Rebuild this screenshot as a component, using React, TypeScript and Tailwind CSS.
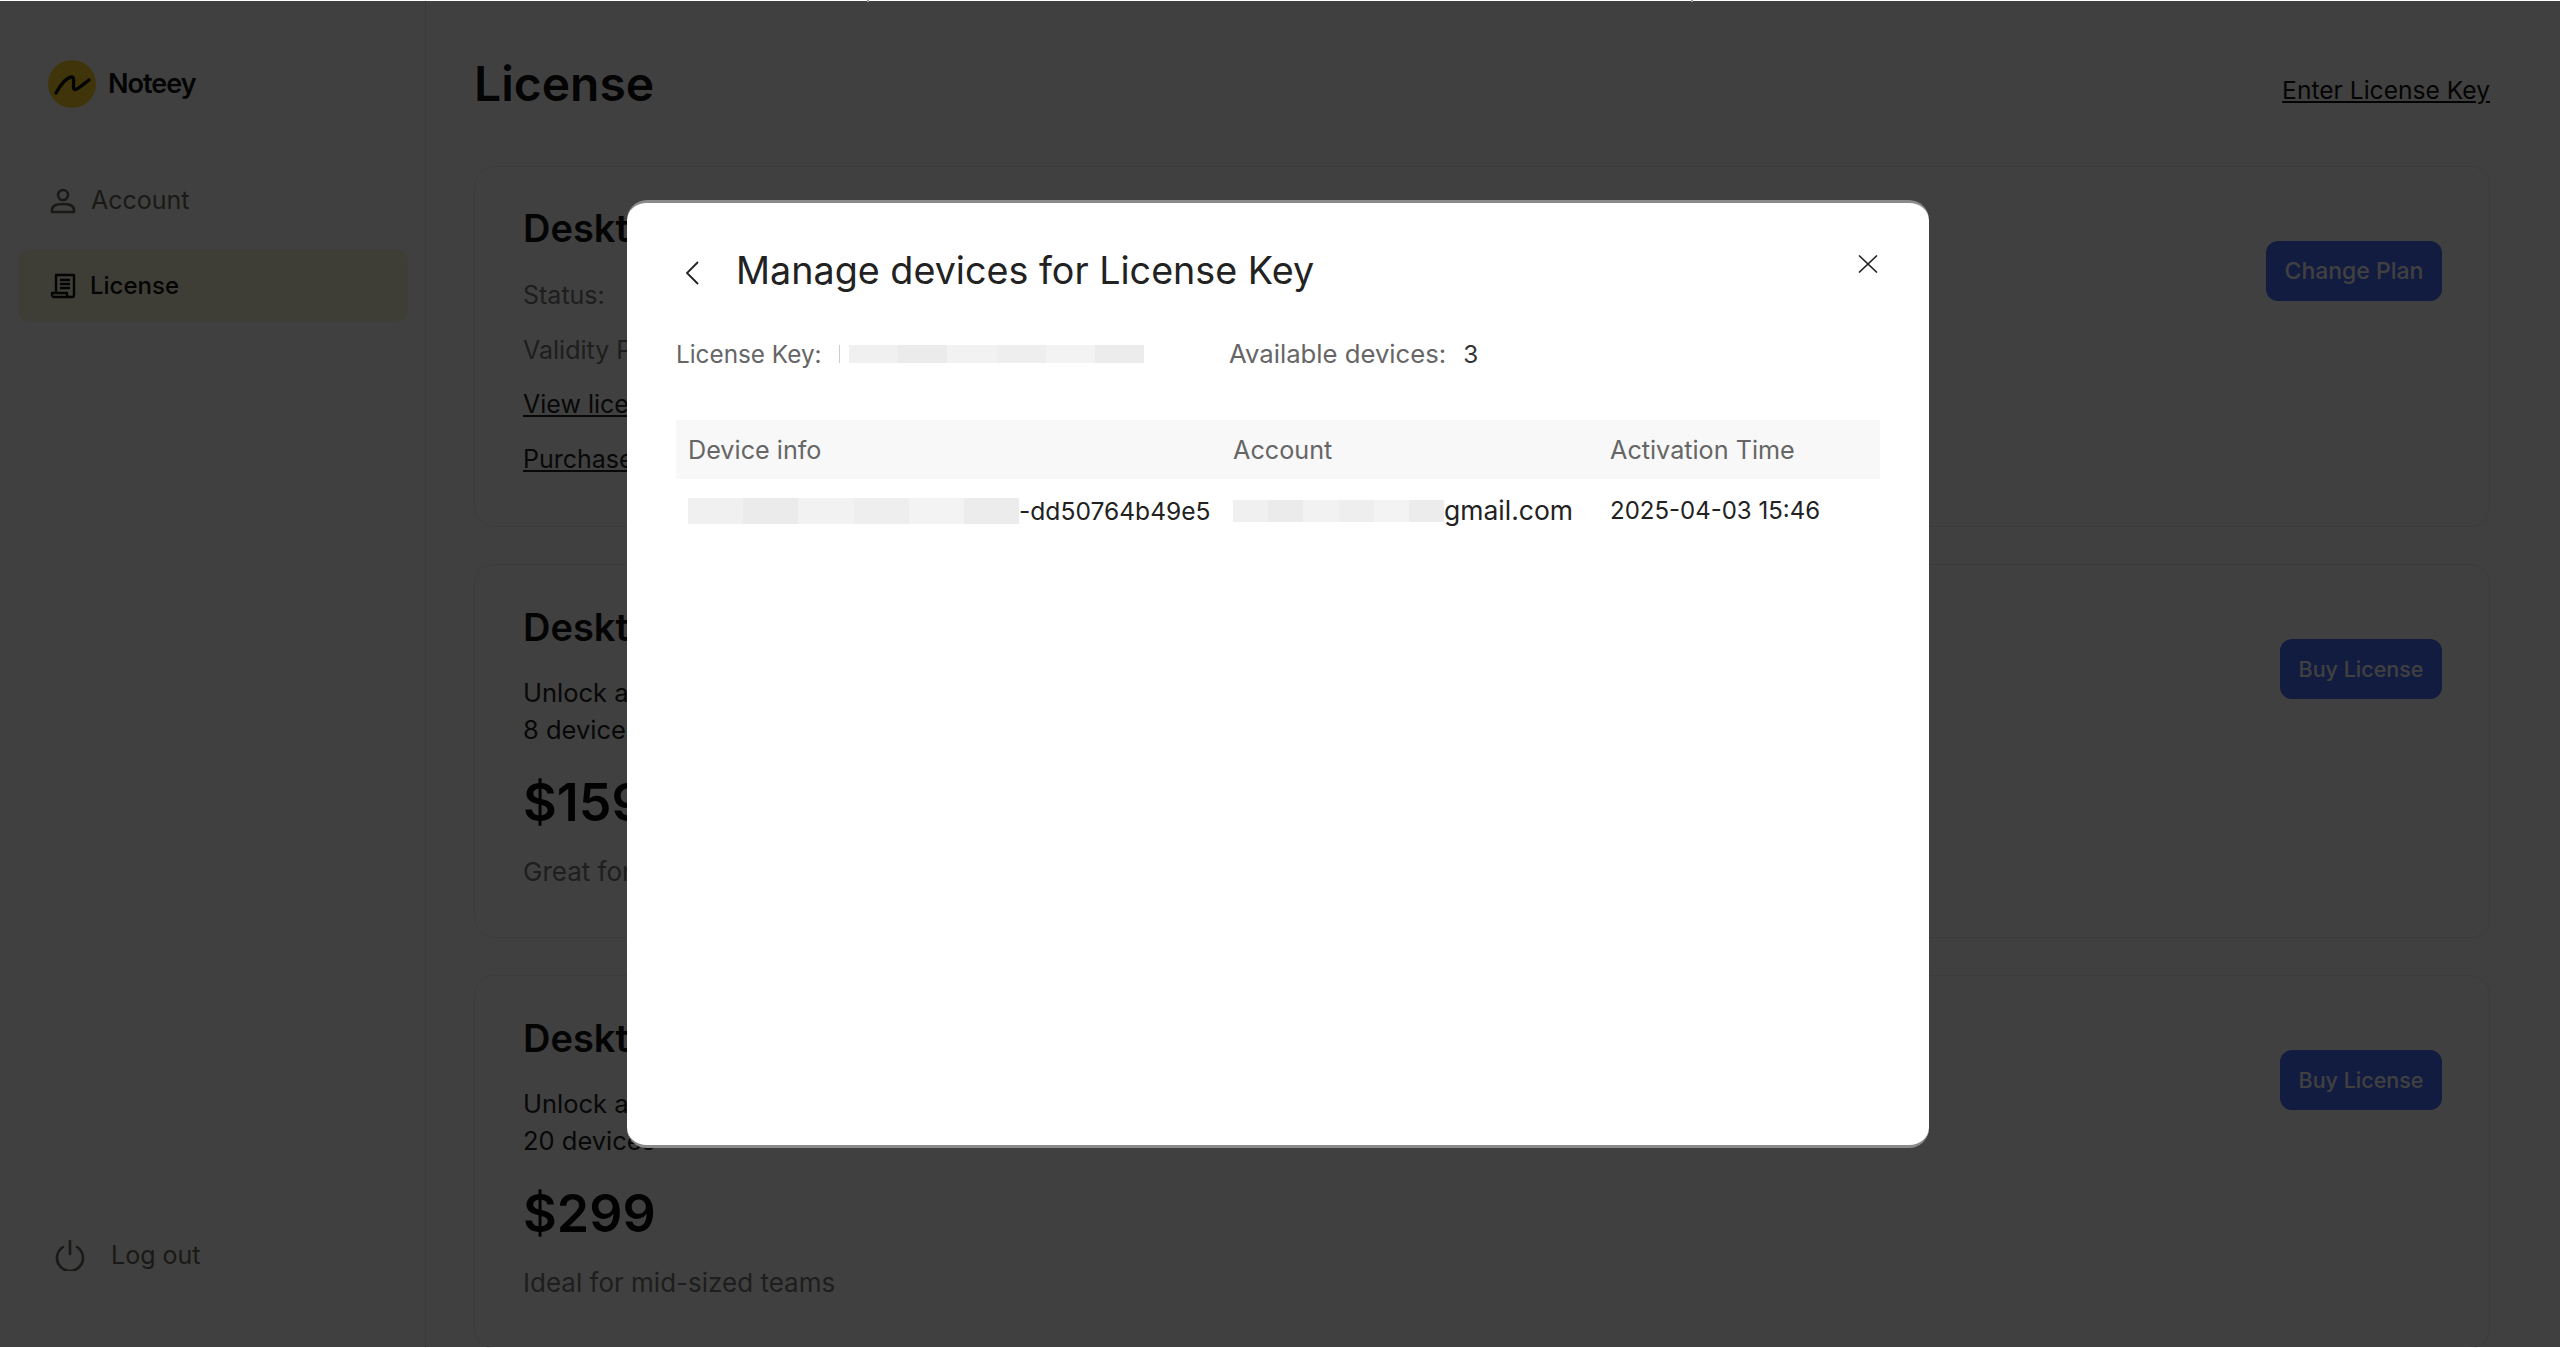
const sans = 'font-["Inter","Noto_Sans",sans-serif]'

function BlurBlock({ className }: { className: string }) {
  return (
    <div className={`flex overflow-hidden ${className}`}>
      <div className="flex-1 bg-[#f0f0f0]" />
      <div className="flex-1 bg-[#ebebeb]" />
      <div className="flex-1 bg-[#f2f2f2]" />
      <div className="flex-1 bg-[#eeeeee]" />
      <div className="flex-1 bg-[#f3f3f3]" />
      <div className="flex-1 bg-[#ececec]" />
    </div>
  )
}

function Logo() {
  return (
    <svg width="48" height="48" viewBox="0 0 48 48" fill="none">
      <circle cx="24" cy="24" r="24" fill="#ffd02e" />
      <path d="M8 33C13 24 18 18 23 17C28 16 24 27 26 29C28 31 33 26 41 20" stroke="#111" strokeWidth="3.4" strokeLinecap="round" />
    </svg>
  )
}

function UserIcon() {
  return (
    <svg width="26" height="26" viewBox="0 0 26 26" fill="none" stroke="#6b6558" strokeWidth="2.6">
      <circle cx="13" cy="7" r="5" />
      <path d="M2 24v-2c0-4 4-6 11-6s11 2 11 6v2z" strokeLinejoin="round" />
    </svg>
  )
}

function LicenseIcon() {
  return (
    <svg width="26" height="26" viewBox="0 0 26 26" fill="none" stroke="#111" strokeWidth="2.4">
      <path d="M6 20V2h18v20c0 1-1 2-2 2H4c-1 0-2-1-2-2v-2h15v2c0 1 1 2 3 2" strokeLinejoin="round" />
      <path d="M10 7h10M10 11h10M10 15h10" />
    </svg>
  )
}

function PowerIcon() {
  return (
    <svg width="32" height="32" viewBox="0 0 32 32" fill="none" stroke="#6b6558" strokeWidth="2.6" strokeLinecap="round">
      <path d="M9 8a13 13 0 1 0 14 0" />
      <path d="M16 2v13" />
    </svg>
  )
}

function Button({ label, className }: { label: string; className: string }) {
  return (
    <div className={`flex h-[60px] items-center justify-center rounded-xl bg-[#486cff] font-medium text-white ${className}`}>
      {label}
    </div>
  )
}

function PlanCard({ lines, price, note }: { lines: string[]; price: string; note: string }) {
  return (
    <div className="flex h-[374px] justify-between rounded-[20px] border border-[#ebebeb] pt-[42px] pr-[47px] pl-[48px]">
      <div>
        <h2 className="text-[38px] leading-[40px] font-semibold text-[#111]">Desktop Team</h2>
        <div className="mt-[28px] text-[25.5px] leading-[36.5px] text-[#222]">
          {lines.map((l) => (
            <p key={l}>{l}</p>
          ))}
        </div>
        <p className="mt-[23px] text-[52px] leading-[64px] font-semibold text-[#0a0a0a]">{price}</p>
        <p className="mt-[19px] text-[26px] leading-[36px] text-[#777]">{note}</p>
      </div>
      <div className="mt-[32px]">
        <Button label="Buy License" className="w-[162px] text-[21.5px]" />
      </div>
    </div>
  )
}

export default function App() {
  return (
    <div className={`relative flex h-[1348px] w-[2560px] overflow-hidden bg-white ${sans}`}>
      <aside className="flex h-full w-[426px] shrink-0 flex-col border-r border-[#ececec] pt-[60px] pr-[17px] pb-[74px] pl-[18px]">
        <div className="flex items-center gap-[12px] pl-[30px]">
          <Logo />
          <span className="text-[27px] font-semibold tracking-[-1px] text-[#111]">Noteey</span>
        </div>
        <div className="mt-[80px] flex h-[26px] items-center gap-[15px] pl-[32px] text-[25px] text-[#6b6558]">
          <UserIcon />
          <span>Account</span>
        </div>
        <div className="mt-[35px] flex h-[73px] items-center gap-[14px] rounded-xl bg-[#f5f5dc] pl-[32px] text-[24px] font-medium text-[#111]">
          <LicenseIcon />
          <span>License</span>
        </div>
        <div className="mt-auto flex items-center gap-[25px] pl-[36px] text-[25px] text-[#6b6558]">
          <PowerIcon />
          <span>Log out</span>
        </div>
      </aside>

      <main className="min-w-0 flex-1 pt-[48px] pr-[70px] pl-[48px]">
        <div className="flex h-[72px] items-center justify-between">
          <h1 className="text-[48px] font-semibold text-[#111]">License</h1>
          <a className="mt-[12px] text-[24.6px] text-[#111] underline">Enter License Key</a>
        </div>
        <div className="mt-[46px] flex flex-col gap-[37px]">
          <div className="flex h-[361px] justify-between rounded-[20px] border border-[#ebebeb] pt-[41px] pr-[47px] pl-[48px]">
            <div>
              <h2 className="text-[38px] leading-[40px] font-semibold text-[#111]">Desktop Pro</h2>
              <div className="mt-[29px] flex flex-col gap-[18.5px] text-[25px] leading-[36px]">
                <p className="text-[#777]">Status:</p>
                <p className="text-[#777]">Validity Period:</p>
                <p className="text-[#222] underline">View license</p>
                <p className="text-[#222] underline">Purchase history</p>
              </div>
            </div>
            <div className="mt-[33px]">
              <Button label="Change Plan" className="w-[176px] text-[23px]" />
            </div>
          </div>
          <PlanCard lines={['Unlock all features', '8 devices']} price="$159" note="Great for small teams" />
          <PlanCard lines={['Unlock all features', '20 devices']} price="$299" note="Ideal for mid-sized teams" />
        </div>
      </main>

      {/* dialog backdrop, the capture leaves a 1px light row above and below it */}
      <div className="absolute inset-x-0 top-px bottom-px flex items-start bg-black/75 pt-[199px] pl-[627px]">
        <div className="relative h-[948px] w-[1302px] rounded-[20px] border-y-[3px] border-[#8a8a8a] bg-white px-[49px] pt-[44px]">
          <div className="flex h-[46px] items-center">
            <svg className="mt-[5px] ml-[8px]" width="16" height="26" viewBox="0 0 16 26" fill="none" stroke="#222" strokeWidth="1.8">
              <path d="M14 2L3 13l11 11" />
            </svg>
            <h3 className="ml-[36px] text-[37.7px] text-[#222]">Manage devices for License Key</h3>
          </div>
          <svg className="absolute top-[52px] right-[51px]" width="20" height="18" viewBox="0 0 20 18" fill="none" stroke="#222" strokeWidth="1.6">
            <path d="M1 0.5l18 17M19 0.5L1 17.5" />
          </svg>

          <div className="mt-[43px] flex h-[36px] items-center text-[24.3px] text-[#666]">
            <span className="w-[163px]">License Key:</span>
            <div className="h-[18px] w-px bg-[#cccccc]" />
            <BlurBlock className="ml-[9px] h-[18px] w-[295px]" />
            <span className="ml-[85px] text-[25.7px]">Available devices:</span>
            <span className="ml-[17px] text-[#333]">3</span>
          </div>

          <div className="mt-[48px] flex h-[59px] items-center bg-[#f8f8f8] pt-[2px] pl-[12px] text-[25.2px] text-[#666]">
            <span className="w-[545px]">Device info</span>
            <span className="w-[377px]">Account</span>
            <span>Activation Time</span>
          </div>
          <div className="flex h-[62px] items-center pt-[2px] pl-[12px] text-[24px] text-[#222]">
            <div className="flex w-[545px] items-center">
              <BlurBlock className="h-[26px] w-[331px]" />
              <span className="text-[24.6px]">-dd50764b49e5</span>
            </div>
            <div className="flex w-[377px] items-center">
              <BlurBlock className="h-[22px] w-[211px]" />
              <span className="text-[26.5px]">gmail.com</span>
            </div>
            <span>2025-04-03 15:46</span>
          </div>
        </div>
      </div>
      <div className="absolute top-0 left-[867px] h-[2px] w-[2px] bg-[#9a9a9a]" />
      <div className="absolute top-0 left-[1691px] h-[2px] w-[2px] bg-[#9a9a9a]" />
    </div>
  )
}
